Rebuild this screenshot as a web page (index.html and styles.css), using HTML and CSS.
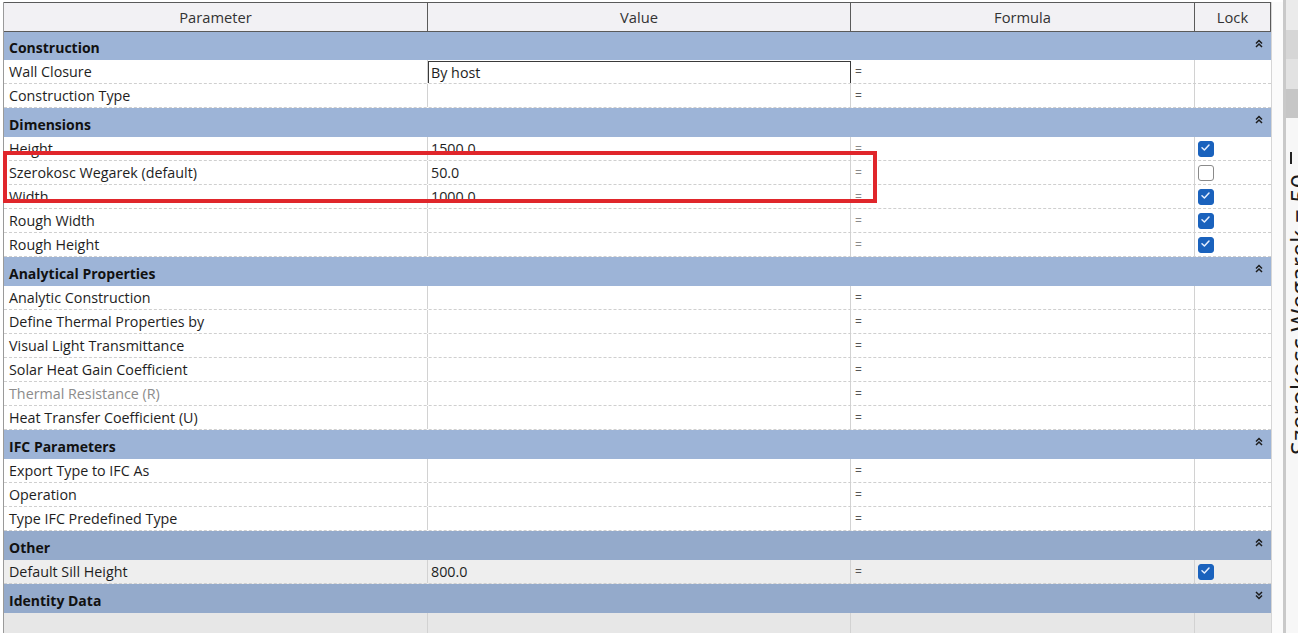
FILE: index.html
```html
<!DOCTYPE html>
<html lang="en">
<head>
  <meta charset="UTF-8" />
  <title>Type Properties</title>
  <link rel="stylesheet" href="styles.css">
</head>
<body>
  <div class="page">
    <div class="props">
      <div class="row head">
        <div class="cell">Parameter</div>
        <div class="cell">Value</div>
        <div class="cell">Formula</div>
        <div class="cell">Lock</div>
      </div>

      <div class="group first"><span>Construction</span><svg class="chev" width="8" height="9" viewBox="0 0 8 9"><path d="M1 4.5 L4 1.5 L7 4.5 M1 8 L4 5 L7 8"/></svg></div>
      <div class="row">
        <div class="cell">Wall Closure</div>
        <div class="cell val"><div class="edit">By host</div></div>
        <div class="cell formula dark">=</div>
        <div class="cell lock"></div>
      </div>
      <div class="row">
        <div class="cell">Construction Type</div>
        <div class="cell val"></div>
        <div class="cell formula dark">=</div>
        <div class="cell lock"></div>
      </div>

      <div class="group"><span>Dimensions</span><svg class="chev" width="8" height="9" viewBox="0 0 8 9"><path d="M1 4.5 L4 1.5 L7 4.5 M1 8 L4 5 L7 8"/></svg></div>
      <div class="row">
        <div class="cell">Height</div>
        <div class="cell val">1500.0</div>
        <div class="cell formula">=</div>
        <div class="cell lock"><span class="check on"><svg width="15" height="15" viewBox="0 0 15 15"><path d="M4 7.8 L6.4 10 L11 5"/></svg></span></div>
      </div>
      <div class="row">
        <div class="cell">Szerokosc Wegarek (default)</div>
        <div class="cell val">50.0</div>
        <div class="cell formula">=</div>
        <div class="cell lock"><span class="check"></span></div>
      </div>
      <div class="row">
        <div class="cell">Width</div>
        <div class="cell val">1000.0</div>
        <div class="cell formula">=</div>
        <div class="cell lock"><span class="check on"><svg width="15" height="15" viewBox="0 0 15 15"><path d="M4 7.8 L6.4 10 L11 5"/></svg></span></div>
      </div>
      <div class="row">
        <div class="cell">Rough Width</div>
        <div class="cell val"></div>
        <div class="cell formula">=</div>
        <div class="cell lock"><span class="check on"><svg width="15" height="15" viewBox="0 0 15 15"><path d="M4 7.8 L6.4 10 L11 5"/></svg></span></div>
      </div>
      <div class="row">
        <div class="cell">Rough Height</div>
        <div class="cell val"></div>
        <div class="cell formula">=</div>
        <div class="cell lock"><span class="check on"><svg width="15" height="15" viewBox="0 0 15 15"><path d="M4 7.8 L6.4 10 L11 5"/></svg></span></div>
      </div>

      <div class="group"><span>Analytical Properties</span><svg class="chev" width="8" height="9" viewBox="0 0 8 9"><path d="M1 4.5 L4 1.5 L7 4.5 M1 8 L4 5 L7 8"/></svg></div>
      <div class="row">
        <div class="cell">Analytic Construction</div>
        <div class="cell val"></div>
        <div class="cell formula dark">=</div>
        <div class="cell lock"></div>
      </div>
      <div class="row">
        <div class="cell">Define Thermal Properties by</div>
        <div class="cell val"></div>
        <div class="cell formula dark">=</div>
        <div class="cell lock"></div>
      </div>
      <div class="row">
        <div class="cell">Visual Light Transmittance</div>
        <div class="cell val"></div>
        <div class="cell formula dark">=</div>
        <div class="cell lock"></div>
      </div>
      <div class="row">
        <div class="cell">Solar Heat Gain Coefficient</div>
        <div class="cell val"></div>
        <div class="cell formula dark">=</div>
        <div class="cell lock"></div>
      </div>
      <div class="row">
        <div class="cell muted">Thermal Resistance (R)</div>
        <div class="cell val"></div>
        <div class="cell formula dark">=</div>
        <div class="cell lock"></div>
      </div>
      <div class="row">
        <div class="cell">Heat Transfer Coefficient (U)</div>
        <div class="cell val"></div>
        <div class="cell formula dark">=</div>
        <div class="cell lock"></div>
      </div>

      <div class="group"><span>IFC Parameters</span><svg class="chev" width="8" height="9" viewBox="0 0 8 9"><path d="M1 4.5 L4 1.5 L7 4.5 M1 8 L4 5 L7 8"/></svg></div>
      <div class="row">
        <div class="cell">Export Type to IFC As</div>
        <div class="cell val"></div>
        <div class="cell formula dark">=</div>
        <div class="cell lock"></div>
      </div>
      <div class="row">
        <div class="cell">Operation</div>
        <div class="cell val"></div>
        <div class="cell formula dark">=</div>
        <div class="cell lock"></div>
      </div>
      <div class="row">
        <div class="cell">Type IFC Predefined Type</div>
        <div class="cell val"></div>
        <div class="cell formula dark">=</div>
        <div class="cell lock"></div>
      </div>

      <div class="group dim"><span>Other</span><svg class="chev" width="8" height="9" viewBox="0 0 8 9"><path d="M1 4.5 L4 1.5 L7 4.5 M1 8 L4 5 L7 8"/></svg></div>
      <div class="row grey">
        <div class="cell">Default Sill Height</div>
        <div class="cell val">800.0</div>
        <div class="cell formula dark">=</div>
        <div class="cell lock"><span class="check on"><svg width="15" height="15" viewBox="0 0 15 15"><path d="M4 7.8 L6.4 10 L11 5"/></svg></span></div>
      </div>

      <div class="group dim"><span>Identity Data</span><svg class="chev" width="8" height="9" viewBox="0 0 8 9"><path d="M1 1 L4 4 L7 1 M1 4.5 L4 7.5 L7 4.5"/></svg></div>
      <div class="row greyer">
        <div class="cell"></div>
        <div class="cell val"></div>
        <div class="cell formula"></div>
        <div class="cell lock"></div>
      </div>

      <div class="highlight"></div>
    </div>

    <div class="gap"></div>

    <div class="side">
      <div class="tabs">
        <div class="tab t1"></div>
        <div class="tab t2"></div>
        <div class="tab t3"></div>
        <div class="tab t4"></div>
      </div>
      <div class="canvas">
        <span class="dim-label">Szerokosc Wegarek = 50</span>
        <span class="dim-tick"></span>
      </div>
    </div>
  </div>
</body>
</html>
```

FILE: styles.css
```css
* {
  box-sizing: border-box;
  margin: 0;
  padding: 0;
}

html, body {
  height: 100%;
  overflow: hidden;
  background: #ffffff;
  font-family: 'Segoe UI', 'Open Sans', sans-serif;
  font-size: 14.3px;
  color: #1e1e1e;
}

.page {
  display: flex;
  height: 633px;
  padding: 2px 0 0 3px;
}

.props {
  position: relative;
  width: 1269px;
  flex: none;
  border-left: 1px solid #9a9a9a;
  border-right: 1px solid #d6d6d6;
}

.row {
  display: grid;
  grid-template-columns: 424px 423px 344px 1fr;
  height: 24px;
  border-bottom: 1px dashed #cfcfcf;
  background: #ffffff;
}

.cell {
  display: flex;
  align-items: center;
  padding-left: 5px;
  border-right: 1px solid #d2d2d2;
  white-space: nowrap;
  overflow: hidden;
}

.cell:last-child {
  border-right: none;
}

.row.head {
  height: 30px;
  background: #f2f1f4;
  border: 1px solid #5a5a5a;
  border-left: none;
  font-size: 14.7px;
  color: #333;
}

.row.head .cell {
  justify-content: center;
  padding-left: 0;
  border-right: 1px solid #5a5a5a;
}

.row.head .cell:last-child {
  border-right: none;
}

.val {
  padding-left: 3px;
}

.edit {
  width: 100%;
  height: 23px;
  margin-top: 1px;
  border: 1px solid #3a3a3a;
  background: #fff;
  display: flex;
  align-items: center;
  padding-left: 2px;
}

.row:has(.edit) .val {
  padding-left: 0;
  border-right: none;
}

.formula {
  padding-left: 4px;
  font-size: 12px;
  color: #8a8a8a;
}

.formula.dark {
  color: #555;
}

.lock {
  padding-left: 3px;
}

.muted {
  color: #8c8c8c;
}

.check {
  width: 16px;
  height: 16px;
  border: 1.5px solid #8a8a8a;
  border-radius: 3px;
  background: #fff;
  display: flex;
}

.check.on {
  background: #1a62bd;
  border-color: #1a62bd;
}

.check svg {
  margin: -1.5px;
}

.check path {
  fill: none;
  stroke: #e6efff;
  stroke-width: 1.5;
  stroke-linecap: round;
  stroke-linejoin: round;
}

.group {
  display: flex;
  align-items: center;
  justify-content: space-between;
  height: 29px;
  padding: 3px 8px 0 5px;
  background: #9db4d7;
  font-weight: bold;
  font-size: 14px;
  color: #111;
}

.group.first {
  height: 28px;
}

.group .chev {
  align-self: flex-start;
  margin-top: 4px;
}

.group.dim {
  background: #94aacb;
}

.chev path {
  fill: none;
  stroke: #1c1c1c;
  stroke-width: 1.5;
}

.row.grey {
  background: #eeeeee;
}

.row.greyer {
  background: #e7e7e7;
  border-bottom: none;
}

.highlight {
  position: absolute;
  left: -1px;
  top: 149px;
  width: 874px;
  height: 52px;
  border: 4px solid #e0262b;
  pointer-events: none;
}

.gap {
  width: 11px;
  flex: none;
  background: #fbfbfb;
}

.side {
  flex: 1;
  display: flex;
  flex-direction: column;
  margin-top: -2px;
  border-left: 3px solid #c9c9c9;
  overflow: hidden;
}

.tabs {
  height: 118px;
  display: flex;
  flex-direction: column;
}

.tab {
  flex: 1;
}

.t1 { background: #ebebeb; }
.t2 { background: #d6d6d6; }
.t3 { background: #e2e2e2; }
.t4 { background: #c6c6c6; }

.canvas {
  position: relative;
  flex: 1;
  background: #f7f7f7;
}

.dim-label {
  position: absolute;
  left: 1px;
  top: 337px;
  transform: rotate(-90deg);
  transform-origin: 0 0;
  font-size: 25px;
  color: #1a1a1a;
  white-space: nowrap;
  line-height: 1;
}

.dim-tick {
  position: absolute;
  left: 4px;
  top: 34px;
  width: 2px;
  height: 12px;
  background: #222;
}
```
